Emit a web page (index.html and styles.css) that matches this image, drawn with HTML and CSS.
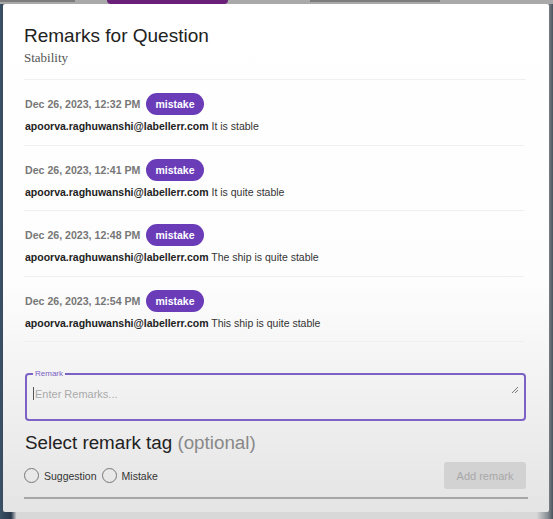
FILE: index.html
```html
<!DOCTYPE html>
<html lang="en">

<head>
    <meta charset="UTF-8">
    <meta name="viewport" content="width=device-width, initial-scale=1.0">
    <title>Remarks</title>
    <link rel="stylesheet" href="styles.css">
</head>

<body>
    <div class="backdrop">
        <div class="top-strip">
            <span class="strip-mark left"></span>
            <span class="strip-pill"></span>
            <span class="strip-mark right"></span>
        </div>

        <div class="modal">
            <h2 class="modal-title">Remarks for Question</h2>
            <p class="question-name">Stability</p>

            <div class="remarks-list">
                <div class="remark">
                    <div class="remark-head">
                        <span class="remark-date">Dec 26, 2023, 12:32 PM</span>
                        <span class="tag">mistake</span>
                    </div>
                    <div class="remark-body"><b>apoorva.raghuwanshi@labellerr.com</b> It is stable</div>
                </div>
                <div class="remark">
                    <div class="remark-head">
                        <span class="remark-date">Dec 26, 2023, 12:41 PM</span>
                        <span class="tag">mistake</span>
                    </div>
                    <div class="remark-body"><b>apoorva.raghuwanshi@labellerr.com</b> It is quite stable</div>
                </div>
                <div class="remark">
                    <div class="remark-head">
                        <span class="remark-date">Dec 26, 2023, 12:48 PM</span>
                        <span class="tag">mistake</span>
                    </div>
                    <div class="remark-body"><b>apoorva.raghuwanshi@labellerr.com</b> The ship is quite stable</div>
                </div>
                <div class="remark">
                    <div class="remark-head">
                        <span class="remark-date">Dec 26, 2023, 12:54 PM</span>
                        <span class="tag">mistake</span>
                    </div>
                    <div class="remark-body"><b>apoorva.raghuwanshi@labellerr.com</b> This ship is quite stable</div>
                </div>
            </div>

            <fieldset class="remark-field">
                <legend>Remark</legend>
                <div class="placeholder"><span class="caret"></span>Enter Remarks...</div>
                <svg class="resize" width="8" height="8" viewBox="0 0 8 8">
                    <path d="M7 1 L1 7 M7 4 L4 7" stroke="#777" stroke-width="1" fill="none" />
                </svg>
            </fieldset>

            <h3 class="tag-title">Select remark tag <span class="muted">(optional)</span></h3>

            <div class="tag-row">
                <label class="radio"><span class="circle"></span>Suggestion</label>
                <label class="radio"><span class="circle"></span>Mistake</label>
                <button class="add-btn">Add remark</button>
            </div>

            <div class="bottom-line"></div>
        </div>
    </div>
</body>

</html>
```

FILE: styles.css
```css
* {
    box-sizing: border-box;
}

body {
    margin: 0;
    font-family: "Liberation Sans", Arial, sans-serif;
    background: #1f2d3d;
}

.backdrop {
    height: 519px;
    overflow: hidden;
    background: linear-gradient(90deg, #3c5266 0%, #2a3a4c 2%, #d8d8d8 3%, #d8d8d8 97%, #8a9096 99%, #4a525c 100%);
}

.top-strip {
    height: 4px;
    background: #a9a9a9;
    display: flex;
    align-items: flex-start;
    overflow: hidden;
}

.strip-mark {
    height: 2px;
    background: #7d7d7d;
    margin-top: 0;
}

.strip-mark.left {
    margin-left: 0;
    width: 75px;
}

.strip-mark.right {
    margin-left: 82px;
    width: 130px;
}

.strip-pill {
    margin-left: 32px;
    width: 121px;
    height: 4px;
    background: #6a1f78;
    border-radius: 0 0 6px 6px;
}

.modal {
    margin: 0 4px 0 3px;
    height: 508px;
    background: linear-gradient(180deg, #ffffff 0%, #fdfdfd 55%, #f2f2f2 75%, #e4e4e4 100%);
    border-radius: 2px;
    padding: 0 23px 0 21px;
    display: flex;
    flex-direction: column;
}

.modal-title {
    margin: 20px 0 0 0;
    font-size: 19px;
    font-weight: 500;
    color: #222;
    line-height: 23px;
}

.question-name {
    margin: 2px 0 0 0;
    font-family: "Liberation Serif", "Times New Roman", serif;
    font-size: 13px;
    color: #555;
    line-height: 18px;
}

.remarks-list {
    margin-top: 12px;
    border-top: 1px solid #f0f0f0;
    padding-right: 2px;
}

.remark {
    height: 65.5px;
    border-bottom: 1px solid #efefef;
    padding: 13px 0 0 1px;
}

.remark-head {
    display: flex;
    align-items: center;
    gap: 6px;
}

.remark-date {
    font-size: 10.6px;
    font-weight: bold;
    color: #777;
}

.tag {
    background: #6a3cb8;
    color: #fff;
    font-size: 10.5px;
    font-weight: bold;
    border-radius: 11px;
    height: 22px;
    line-height: 22px;
    padding: 0 9px;
}

.remark-body {
    margin-top: 5px;
    font-size: 10.5px;
    color: #333;
}

.remark-body b {
    color: #222;
}

.remark-field {
    margin: 28px 0 0 1px;
    height: 51px;
    border: 2px solid #7b62c4;
    border-radius: 4px;
    padding: 0 6px;
    position: relative;
}

.remark-field legend {
    font-size: 8px;
    color: #7b62c4;
    padding: 0 2px;
    margin-left: 0;
    line-height: 8px;
}

.placeholder {
    margin-top: 9px;
    font-size: 11px;
    color: #aaa;
    display: flex;
    align-items: center;
}

.caret {
    width: 1px;
    height: 13px;
    background: #555;
    margin-right: 1px;
}

.resize {
    position: absolute;
    right: 5px;
    bottom: 6px;
}

.tag-title {
    margin: 11px 0 0 1px;
    font-size: 18.8px;
    font-weight: 500;
    color: #222;
    line-height: 22px;
}

.muted {
    color: #888;
}

.tag-row {
    display: flex;
    align-items: center;
    margin-top: 8px;
}

.radio {
    display: flex;
    align-items: center;
    font-size: 10.5px;
    color: #333;
    margin-right: 5px;
}

.circle {
    width: 15px;
    height: 15px;
    border: 1.5px solid #777;
    border-radius: 50%;
    margin-right: 5px;
}

.add-btn {
    margin-left: auto;
    margin-right: 0;
    width: 82px;
    height: 27px;
    border: none;
    border-radius: 3px;
    background: #d2d2d2;
    color: #a8a8a8;
    font-family: "Liberation Sans", Arial, sans-serif;
    font-size: 11px;
}

.bottom-line {
    margin-top: 8px;
    height: 2px;
    background: #a6a6a6;
    margin-right: -2px;
}
```
